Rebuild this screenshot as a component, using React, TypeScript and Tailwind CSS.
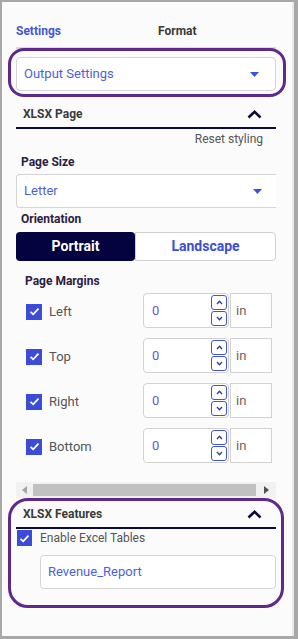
import React from "react";

const Caret = () => (
  <svg width="9" height="5" viewBox="0 0 9 5">
    <path d="M0 0 L9 0 L4.5 5 Z" fill="#3d52d6" />
  </svg>
);

const ChevronUp = () => (
  <svg width="15" height="9" viewBox="0 0 15 9">
    <polyline points="1.5,7.5 7.5,1.8 13.5,7.5" fill="none" stroke="#0a0a45" strokeWidth="2.6" />
  </svg>
);

const Check = ({ className }: { className: string }) => (
  <div className={`flex items-center justify-center bg-[#3b4dd8] ${className}`}>
    <svg width="11" height="9" viewBox="0 0 11 9">
      <polyline points="1.5,4.8 4.2,7.3 9.5,1.7" fill="none" stroke="#ffffff" strokeWidth="1.8" />
    </svg>
  </div>
);

const Spin = ({ up }: { up: boolean }) => (
  <div className="flex h-[15px] w-[16px] items-center justify-center rounded-[3px] border border-[#4255d9] bg-white">
    <svg width="7" height="5" viewBox="0 0 7 5">
      <polyline
        points={up ? "1,4 3.5,1.3 6,4" : "1,1 3.5,3.7 6,1"}
        fill="none"
        stroke="#2d3a9a"
        strokeWidth="1.3"
      />
    </svg>
  </div>
);

const MarginRow = ({ label }: { label: string }) => (
  <div className="flex h-[35px] items-center">
    <div className="flex w-[127px] items-center pt-[2px]">
      <Check className="ml-[10px] h-[16px] w-[16px]" />
      <span className="ml-[7px] text-[13px] text-[#555555]">{label}</span>
    </div>
    <div className="flex h-[35px] w-[86px] items-center justify-between rounded-[4px] border border-[#d2d2d2] bg-white pl-[8px] pr-[1px]">
      <span className="text-[13px] text-[#6a52d9]">0</span>
      <div className="flex flex-col gap-[1px]">
        <Spin up={true} />
        <Spin up={false} />
      </div>
    </div>
    <div className="ml-[1px] flex h-[35px] w-[42px] items-center border border-[#d2d2d2] bg-white pl-[5px]">
      <span className="text-[13px] text-[#6e6259]">in</span>
    </div>
  </div>
);

export default function App() {
  return (
    <div className="h-[639px] w-[298px] bg-[#a8a8a8] pb-[3px] pl-[2px] pr-[4px] pt-[2px] font-['Roboto',sans-serif]">
      <div className="h-full overflow-hidden border-r-2 border-[#e8e8e8] bg-[#fbfbfb] pl-[14px]">
        <div className="w-[260px]">
          {/* Tabs */}
          <div className="flex h-[47px] border-b-2 border-[#dadada] pt-[21px] text-[12px] font-bold leading-[16px]">
            <span className="w-[142px] text-[#4356d9]">Settings</span>
            <span className="text-[#3a3a3a]">Format</span>
          </div>

          {/* Highlight 1 */}
          <div className="relative -mt-[1px] ml-[-8px] w-[278px] rounded-[16px] border-[3px] border-[#5d2a8c] pb-[3px] pl-[5px] pt-[6px]">
            <div className="flex h-[34px] w-[260px] items-center justify-between rounded-[4px] border border-[#d4d4d4] bg-white pl-[7px] pr-[16px]">
              <span className="text-[13px] text-[#4d5fd9]">Output Settings</span>
              <Caret />
            </div>
          </div>

          {/* XLSX Page header */}
          <div className="flex items-center justify-between border-b-2 border-[#0a0a45] pb-[5px] pl-[7px] pr-[14px] pt-[9px]">
            <span className="text-[12px] font-bold leading-[16px] text-[#3a3a3a]">XLSX Page</span>
            <ChevronUp />
          </div>

          <div className="mt-[2px] pr-[13px] text-right text-[12px] leading-[16px] text-[#555555]">Reset styling</div>

          <div className="mt-[7px] pl-[5px] text-[12px] font-bold leading-[16px] text-[#2b2140]">Page Size</div>
          <div className="mt-[4px] flex h-[34px] w-[260px] items-center justify-between rounded-l-[4px] border border-r-0 border-[#d4d4d4] bg-white pl-[7px] pr-[14px]">
            <span className="text-[13px] text-[#4d5fd9]">Letter</span>
            <Caret />
          </div>

          <div className="mt-[3px] pl-[5px] text-[12px] font-bold leading-[16px] text-[#2b2140]">Orientation</div>
          <div className="mt-[5px] flex h-[29px]">
            <div className="flex w-[119px] items-center justify-center rounded-[4px] bg-[#04023f] text-[14px] font-bold text-white">
              Portrait
            </div>
            <div className="flex w-[141px] items-center justify-center rounded-r-[4px] border border-[#d0d0d0] bg-white text-[14px] font-bold text-[#3c4fd6]">
              Landscape
            </div>
          </div>

          <div className="mt-[12px] pl-[9px] text-[12px] font-bold leading-[16px] text-[#2b2140]">Page Margins</div>
          <div className="mt-[4px] flex flex-col gap-[10px]">
            <MarginRow label="Left" />
            <MarginRow label="Top" />
            <MarginRow label="Right" />
            <MarginRow label="Bottom" />
          </div>

          {/* Horizontal scrollbar */}
          <div className="mt-[19px] flex h-[16px] items-center bg-[#f1f1f1]">
            <div className="flex w-[17px] items-center justify-center">
              <svg width="5" height="8" viewBox="0 0 5 8">
                <path d="M5 0 L0 4 L5 8 Z" fill="#a3a3a3" />
              </svg>
            </div>
            <div className="h-[12px] w-[223px] bg-[#c1c1c1]" />
            <div className="flex w-[20px] items-center justify-center">
              <svg width="5" height="8" viewBox="0 0 5 8">
                <path d="M0 0 L5 4 L0 8 Z" fill="#505050" />
              </svg>
            </div>
          </div>

          {/* Highlight 2 */}
          <div className="ml-[-8px] w-[276px] rounded-[20px] border-[3px] border-[#5d2a8c] pb-[16px] pl-[5px]">
            <div className="w-[260px]">
              <div className="flex items-center justify-between border-b-2 border-[#0a0a45] pb-[5px] pl-[7px] pr-[14px] pt-[5px]">
                <span className="text-[12px] font-bold leading-[16px] text-[#3a3a3a]">XLSX Features</span>
                <ChevronUp />
              </div>
              <div className="mt-[1px] flex h-[16px] items-center">
                <Check className="ml-[1px] h-[16px] w-[15px]" />
                <span className="ml-[8px] text-[12px] text-[#555555]">Enable Excel Tables</span>
              </div>
              <div className="ml-[24px] mt-[9px] flex h-[34px] w-[236px] items-center rounded-[4px] border border-[#d4d4d4] bg-white pl-[7px]">
                <span className="text-[13px] text-[#4d5fd9]">Revenue_Report</span>
              </div>
            </div>
          </div>
        </div>
      </div>
    </div>
  );
}
